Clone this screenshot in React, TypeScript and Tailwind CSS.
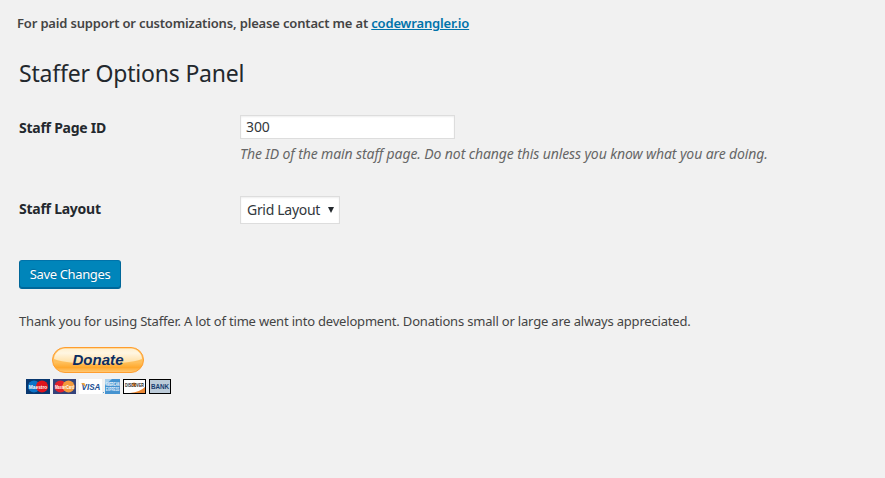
import React from "react";

const CARD = "block h-[15px] shrink-0 overflow-visible";

function DonateButton() {
  return (
    <svg className="block h-[27px] w-[92px]" viewBox="0 0 92 27" role="img" aria-label="Donate">
      <defs>
        <linearGradient id="gold" x1="0" y1="0" x2="0" y2="1">
          <stop offset="0" stopColor="#ffc468" />
          <stop offset="0.6" stopColor="#ffbf5a" />
          <stop offset="0.8" stopColor="#ffa92f" />
          <stop offset="1" stopColor="#ffcb7a" />
        </linearGradient>
        <linearGradient id="gloss" x1="0" y1="0" x2="0" y2="1">
          <stop offset="0" stopColor="#fff0d0" />
          <stop offset="0.3" stopColor="#fff6e2" />
          <stop offset="1" stopColor="#ffdc9b" />
        </linearGradient>
      </defs>
      <rect x="0.5" y="0.5" width="91" height="25" rx="12.5" fill="url(#gold)" stroke="#ff9d2e" />
      <path d="M13 1.5H79C85 1.5 90 7 90 12C73 18.5 19 18.5 2 12C2 7 7 1.5 13 1.5z" fill="url(#gloss)" />
      <text x="46" y="18" textAnchor="middle" textLength="51" lengthAdjust="spacingAndGlyphs" fontFamily="Liberation Sans, sans-serif" fontSize="15" fontWeight="700" fontStyle="italic" fill="#0b2d62">Donate</text>
    </svg>
  );
}

interface MarkProps {
  x: number;
  y: number;
  stretch: number;
  size: number;
  fill: string;
  italic?: boolean;
  children: string;
}

function Mark({ x, y, stretch, size, fill, italic, children }: MarkProps) {
  return (
    <text
      transform={`translate(${x} ${y}) scale(${stretch} 1)`}
      textAnchor="middle"
      fontFamily="Liberation Sans, sans-serif"
      fontSize={size}
      fontWeight="700"
      fontStyle={italic ? "italic" : "normal"}
      fill={fill}
    >
      {children}
    </text>
  );
}

function Cards() {
  return (
    <div className="flex h-[15px]">
      <svg className={`${CARD} w-[24px]`} viewBox="0 0 24 15">
        <rect width="24" height="15" fill="#08376f" />
        <circle cx="8" cy="7.5" r="6" fill="#0b74c9" />
        <circle cx="16" cy="7.5" r="6" fill="#e0141c" />
        <Mark x={12} y={9.5} stretch={0.8} size={6} fill="#fff">Maestro</Mark>
      </svg>
      <svg className={`${CARD} ml-[3px] w-[23px]`} viewBox="0 0 23 15">
        <rect width="23" height="15" fill="#34437b" />
        <circle cx="7.5" cy="7.5" r="6" fill="#e3202c" />
        <circle cx="15.5" cy="7.5" r="6" fill="#f39a3c" />
        <Mark x={11.5} y={9.5} stretch={0.58} size={6} fill="#fff">MasterCard</Mark>
      </svg>
      <svg className={`${CARD} ml-[3px] w-[25px]`} viewBox="0 0 25 15">
        <rect width="23" height="15" fill="#fff" />
        <Mark x={12} y={10.5} stretch={0.9} size={9} fill="#1b4f93" italic>VISA</Mark>
        <path d="M2 4h3.5l1 4z" fill="#e9a33b" />
        <rect x="24" y="13" width="1" height="1" fill="#5599cc" />
      </svg>
      <svg className={`${CARD} ml-px w-[15px]`} viewBox="0 0 15 15">
        <rect width="15" height="15" fill="#4593d0" />
        <path d="M0 0h7L0 6z" fill="#a9d0ec" />
        <Mark x={7.5} y={6.5} stretch={0.56} size={4.5} fill="#fff">AMERICAN</Mark>
        <Mark x={7.5} y={12} stretch={0.64} size={4.5} fill="#e5f2fc">EXPRESS</Mark>
      </svg>
      <svg className={`${CARD} ml-[3px] w-[23px]`} viewBox="0 0 23 15">
        <rect x="0.5" y="0.5" width="22" height="14" fill="#fff" stroke="#000" />
        <path d="M22 8v6H7q10-1 15-6z" fill="#e98734" />
        <circle cx="11" cy="5.5" r="2" fill="#e98734" />
        <Mark x={11.5} y={7.5} stretch={0.66} size={5.5} fill="#222">DISCOVER</Mark>
      </svg>
      <svg className={`${CARD} ml-[3px] w-[22px]`} viewBox="0 0 22 15">
        <rect x="0.5" y="0.5" width="21" height="14" fill="#bccbd9" stroke="#000" />
        <Mark x={11} y={10} stretch={0.9} size={7} fill="#173b70">BANK</Mark>
      </svg>
    </div>
  );
}

export default function App() {
  return (
    <main className="h-[478px] w-[885px] overflow-hidden bg-[#f1f1f1] pt-[13px] font-['Noto_Sans','Open_Sans',sans-serif] text-[13px] whitespace-nowrap text-[#444]">
      <p className="ml-[17px] h-5 leading-5 font-semibold tracking-[-0.165px]">
        For paid support or customizations, please contact me at{" "}
        <a href="#" className="text-[#0073aa] underline">codewrangler.io</a>
      </p>
      <h1 className="mt-[25px] ml-[19px] h-[30px] text-[23px] leading-[30px] font-normal tracking-[-0.2px] text-[#23282d]">Staffer Options Panel</h1>

      <form className="ml-[19px]" onSubmit={(event) => event.preventDefault()}>
        <div className="mt-[27px] flex h-[81px]">
          <label htmlFor="page-id" className="mt-[3px] w-[221px] text-[14px] leading-5 font-bold tracking-[-0.25px] text-[#23282d]">Staff Page ID</label>
          <div>
            <input id="page-id" defaultValue="300" className="block h-6 w-[215px] border border-[#ddd] bg-white px-[5px] pb-[2px] text-[14px] tracking-[-0.1px] text-[#32373c] shadow-[inset_0_1px_2px_rgba(0,0,0,0.07)] outline-none" />
            <p className="mt-[5px] text-[14px] leading-5 tracking-[-0.11px] text-[#666] italic">The ID of the main staff page. Do not change this unless you know what you are doing.</p>
          </div>
        </div>
        <div className="flex h-[64px]">
          <span className="mt-[3px] w-[221px] text-[14px] leading-5 font-bold tracking-[-0.25px] text-[#23282d]">Staff Layout</span>
          <button type="button" className="flex h-7 w-[100px] items-center border border-[#ddd] bg-white pl-[6px] text-[14px] tracking-[-0.3px] text-[#32373c] shadow-[inset_0_1px_2px_rgba(0,0,0,0.07)]">
            <span className="w-[81px] pb-[2px] text-left">Grid Layout</span>
            <svg className="h-[6px] w-[6px]" viewBox="0 0 6 6"><path d="M0 0h6L3 6z" fill="#23282d" /></svg>
          </button>
        </div>
        <button type="submit" className="block h-[29px] w-[102px] rounded-[3px] border border-[#006799] border-t-[#0073aa] bg-[#0085ba] pt-px text-[13px] tracking-[-0.35px] text-white shadow-[inset_0_-1px_0_#006799] [text-shadow:0_-1px_1px_#006799]">Save Changes</button>
      </form>

      <p className="mt-[22px] ml-[19px] leading-5 tracking-[-0.19px]">Thank you for using Staffer. A lot of time went into development. Donations small or large are always appreciated.</p>
      <div className="mt-4 ml-[26px]">
        <div className="mb-[5px] ml-[26px]"><DonateButton /></div>
        <Cards />
      </div>
    </main>
  );
}
